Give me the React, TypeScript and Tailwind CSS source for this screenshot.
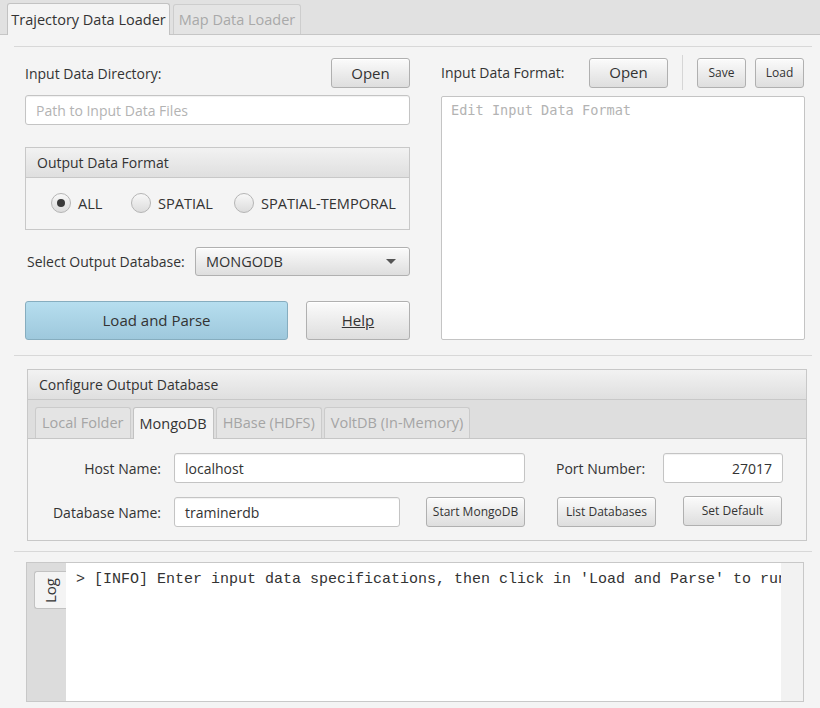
import React, { useState } from 'react';

const btn = 'flex items-center justify-center rounded-[3px] border border-[#b0b0b0] bg-gradient-to-b from-[#fbfbfb] to-[#dedede] text-[#333] shadow-[inset_0_1px_0_#ffffff]';
const field = 'h-[30px] rounded-[3px] border border-[#c4c4c4] bg-white px-[10px] text-[#333] flex items-center shadow-[inset_0_1px_1px_rgba(0,0,0,0.06)]';
const sep = 'h-px bg-[#d8d8d8]';

const Radio = ({ label, checked }: { label: string; checked?: boolean }) => (
  <div className="flex items-center gap-[7px]">
    <div className="flex h-[20px] w-[20px] items-center justify-center rounded-full border border-[#b5b5b5] bg-gradient-to-b from-[#f8f8f8] to-[#dcdcdc]">
      {checked && <div className="h-[8px] w-[8px] rounded-full bg-[#3a3a3a]" />}
    </div>
    <span className="text-[14.6px]">{label}</span>
  </div>
);

const PaneHeader = ({ title }: { title: string }) => (
  <div className="flex h-[30px] items-center border-b border-[#c8c8c8] bg-gradient-to-b from-[#f2f2f2] to-[#dfdfdf] px-[11px]">
    {title}
  </div>
);

export default function App() {
  const [format, setFormat] = useState('ALL');
  const formats = [
    { id: 'ALL', w: 'w-[80px]' },
    { id: 'SPATIAL', w: 'w-[103px]' },
    { id: 'SPATIAL-TEMPORAL', w: 'w-auto' }
  ];
  const dbTabs = ['Local Folder', 'MongoDB', 'HBase (HDFS)', 'VoltDB (In-Memory)'];
  return (
    <div className="h-[708px] w-[820px] overflow-hidden bg-[#f4f4f4] font-['Open_Sans',sans-serif] text-[14px] text-[#333]">
      {/* main tabs */}
      <div className="flex h-[35px] items-end gap-[3px] border-b border-[#c6c6c6] bg-[#e1e1e1] pl-[7px]">
        <div className="-mb-px flex h-[32px] w-[163px] items-center justify-center rounded-t-[3px] border border-b-0 border-[#c2c2c2] bg-[#f4f4f4] text-[14.5px] text-[#333]">
          Trajectory Data Loader
        </div>
        <div className="flex h-[30px] w-[128px] items-center justify-center rounded-t-[3px] border border-b-0 border-[#cdcdcd] bg-[#e4e4e4] text-[14.5px] text-[#a9a9a9]">
          Map Data Loader
        </div>
      </div>

      <div className={`${sep} ml-[14px] mr-[8px] mt-[11px]`} />

      <div className="flex gap-[31px] pl-[25px] pt-[10px]">
        {/* left column */}
        <div className="flex w-[385px] flex-col">
          <div className="flex h-[31px] items-center justify-between pt-[1px]">
            <span>Input Data Directory:</span>
            <button className={`${btn} h-[30px] w-[79px] text-[15px]`}>Open</button>
          </div>
          <div className={`${field} mt-[7px] text-[#b3b3b3]`}>Path to Input Data Files</div>

          <div className="mt-[22px] border border-[#c8c8c8]">
            <PaneHeader title="Output Data Format" />
            <div className="flex h-[51px] items-center pl-[25px]">
              {formats.map(f => (
                <div key={f.id} className={f.w} onClick={() => setFormat(f.id)}>
                  <Radio label={f.id} checked={format === f.id} />
                </div>
              ))}
            </div>
          </div>

          <div className="mt-[17px] flex items-center">
            <span className="ml-[2px] w-[168px]">Select Output Database:</span>
            <div className="flex h-[29px] flex-1 items-center justify-between rounded-[3px] border border-[#b0b0b0] bg-gradient-to-b from-[#fbfbfb] to-[#dedede] pl-[10px] pr-[13px] shadow-[inset_0_1px_0_#ffffff]">
              <span className="text-[14.5px]">MONGODB</span>
              <svg width="10" height="5" viewBox="0 0 10 5"><path d="M0 0h10L5 5z" fill="#555" /></svg>
            </div>
          </div>

          <div className="mt-[25px] flex gap-[18px]">
            <button className="flex h-[39px] w-[263px] items-center justify-center rounded-[3px] border border-[#86adbf] bg-gradient-to-b from-[#b6deef] to-[#9ec8dc] text-[15px] text-[#333]">
              Load and Parse
            </button>
            <button className={`${btn} h-[39px] w-[104px] text-[15px] underline`}>Help</button>
          </div>
        </div>

        {/* right column */}
        <div className="flex w-[364px] flex-col">
          <div className="flex h-[31px] items-center">
            <span className="w-[148px]">Input Data Format:</span>
            <button className={`${btn} h-[30px] w-[79px] text-[15px]`}>Open</button>
            <div className="mx-[14px] h-[35px] w-px bg-[#d6d6d6]" />
            <button className={`${btn} h-[30px] w-[49px] text-[12px]`}>Save</button>
            <button className={`${btn} ml-[9px] h-[30px] w-[49px] text-[12px]`}>Load</button>
          </div>
          <div className="mt-[8px] h-[244px] rounded-[2px] border border-[#c4c4c4] bg-white px-[9px] pt-[3px] font-['DejaVu_Sans_Mono',monospace] text-[13.6px] text-[#b3b3b3]">
            Edit Input Data Format
          </div>
        </div>
      </div>

      <div className={`${sep} ml-[14px] mr-[8px] mt-[15px]`} />

      {/* configure output database */}
      <div className="ml-[27px] mt-[13px] w-[780px] border border-[#c8c8c8]">
        <PaneHeader title="Configure Output Database" />
        <div className="flex h-[39px] items-end gap-[2px] border-b border-[#c6c6c6] bg-[#dedede] pl-[7px]">
          {dbTabs.map(t => (
            <div
              key={t}
              className={
                t === 'MongoDB'
                  ? '-mb-px flex h-[32px] items-center rounded-t-[3px] border border-b-0 border-[#c2c2c2] bg-[#f4f4f4] px-[6px] text-[14.5px] text-[#333]'
                  : 'flex h-[31px] items-center rounded-t-[3px] border border-b-0 border-[#cbcbcb] bg-[#e4e4e4] px-[6px] text-[14.5px] text-[#a5a5a5]'
              }
            >
              {t}
            </div>
          ))}
        </div>
        <div className="flex flex-col gap-[14px] pb-[13px] pt-[14px]">
          <div className="flex items-center">
            <span className="w-[133px] text-right">Host Name:</span>
            <div className={`${field} ml-[13px] w-[351px]`}>localhost</div>
            <span className="ml-[31px] w-[107px]">Port Number:</span>
            <div className={`${field} w-[120px] justify-end`}>27017</div>
          </div>
          <div className="flex items-center">
            <span className="w-[133px] text-right">Database Name:</span>
            <div className={`${field} ml-[13px] w-[226px]`}>traminerdb</div>
            <button className={`${btn} ml-[26px] h-[30px] w-[99px] text-[12px]`}>Start MongoDB</button>
            <button className={`${btn} ml-[32px] h-[30px] w-[99px] text-[12px]`}>List Databases</button>
            <button className={`${btn} ml-[27px] -mt-[2px] h-[30px] w-[99px] text-[12px]`}>Set Default</button>
          </div>
        </div>
      </div>

      <div className={`${sep} ml-[14px] mr-[8px] mt-[10px]`} />

      {/* log */}
      <div className="ml-[26px] mt-[10px] flex h-[140px] w-[778px] border border-[#c8c8c8]">
        <div className="flex w-[39px] justify-end bg-[#dcdcdc] pt-[8px]">
          <div className="flex h-[38px] w-[32px] items-center justify-center rounded-l-[3px] border border-r-0 border-[#c2c2c2] bg-[#f4f4f4]">
            <span className="rotate-180 text-[15px] [writing-mode:vertical-rl]">Log</span>
          </div>
        </div>
        <div className="flex-1 overflow-hidden whitespace-nowrap bg-white pl-[10px] pt-[6px] font-['Liberation_Mono',monospace] text-[15px] text-[#333]">
          &gt; [INFO] Enter input data specifications, then click in 'Load and Parse' to run.
        </div>
        <div className="w-[22px] bg-[#f2f2f2]" />
      </div>
    </div>
  );
}
